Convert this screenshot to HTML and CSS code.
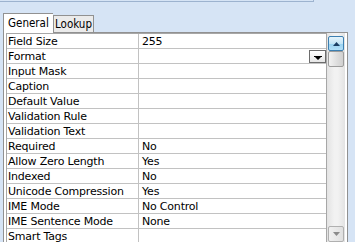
FILE: index.html
```html
<!DOCTYPE html>
<html>
<head>
<meta charset="utf-8">
<link rel="stylesheet" href="styles.css">
</head>
<body>
<div class="topline"><div class="topseg"></div></div>
<div class="tabs">
  <div class="tab active">General</div>
  <div class="tab">Lookup</div>
</div>
<div class="panel">
  <div class="grid">
    <div class="row"><div class="label">Field Size</div><div class="value">255</div></div>
    <div class="row"><div class="label">Format</div><div class="value"><span class="drop"><svg width="8" height="5" viewBox="0 0 8 5"><path d="M0 0H8V1H7L4 4H4L1 1H0Z" fill="#000"/></svg></span></div></div>
    <div class="row"><div class="label">Input Mask</div><div class="value"></div></div>
    <div class="row"><div class="label">Caption</div><div class="value"></div></div>
    <div class="row"><div class="label">Default Value</div><div class="value"></div></div>
    <div class="row"><div class="label">Validation Rule</div><div class="value"></div></div>
    <div class="row"><div class="label">Validation Text</div><div class="value"></div></div>
    <div class="row"><div class="label">Required</div><div class="value">No</div></div>
    <div class="row"><div class="label">Allow Zero Length</div><div class="value">Yes</div></div>
    <div class="row"><div class="label">Indexed</div><div class="value">No</div></div>
    <div class="row"><div class="label">Unicode Compression</div><div class="value">Yes</div></div>
    <div class="row"><div class="label">IME Mode</div><div class="value">No Control</div></div>
    <div class="row"><div class="label">IME Sentence Mode</div><div class="value">None</div></div>
    <div class="row"><div class="label">Smart Tags</div><div class="value"></div></div>
  </div>
  <div class="scrollbar">
    <div class="sbtn up"><svg width="7" height="4" viewBox="0 0 7 4"><path d="M3.5 0L7 4H0Z" fill="#1b3e63"/></svg></div>
    <div class="thumb"></div>
    <div class="track"></div>
    <div class="sbtn down"><svg width="7" height="4" viewBox="0 0 7 4"><path d="M0 0H7L3.5 4Z" fill="#8a8a8a"/></svg></div>
  </div>
</div>
</body>
</html>
```
FILE: styles.css
```css
html, body {
  margin: 0;
  padding: 0;
  height: 100%;
  overflow: hidden;
}
body {
  background: #d6e4f5;
  font-family: "DejaVu Sans", sans-serif;
  font-size: 11px;
  letter-spacing: -0.2px;
  color: #000;
  display: flex;
  flex-direction: column;
}
.topline {
  height: 2px;
  flex: none;
}
.topseg {
  width: 313px;
  height: 1px;
  border-bottom: 1px solid #9db3cf;
  border-right: 1px solid #9db3cf;
}
.tabs {
  flex: none;
  display: flex;
  align-items: flex-end;
  margin-top: 11px;
  padding-left: 3px;
  height: 19px;
  font-family: "DejaVu Sans Condensed", "DejaVu Sans", sans-serif;
  font-size: 11.5px;
  letter-spacing: 0;
}
.tab {
  box-sizing: border-box;
  border: 1px solid #919191;
  border-bottom: none;
  background: #ebebeb;
  height: 17px;
  line-height: 17px;
  padding: 0 1px 0 1px;
  width: 41px;
  overflow: hidden;
  white-space: nowrap;
}
.tab.active {
  background: #fff;
  height: 20px;
  width: 50px;
  line-height: 19px;
  padding-left: 4px;
  margin-bottom: -1px;
  z-index: 1;
  border-right: none;
}
.panel {
  flex: 1;
  min-height: 0;
  overflow: hidden;
  margin-left: 3px;
  width: 345px;
  box-sizing: border-box;
  background: #fff;
  border: 1px solid #919191;
  border-bottom: none;
  padding: 0 2px 0 2px;
  display: flex;
  align-items: flex-start;
}
.grid {
  width: 321px;
  flex: none;
  box-sizing: border-box;
  border-left: 1px solid #a7a7a7;
  border-right: 1px solid #a7a7a7;
  border-top: 1px solid #a7a7a7;
}
.row {
  display: flex;
  height: 15px;
  box-sizing: border-box;
  border-bottom: 1px solid #c2c2c2;
}
.label {
  width: 132px;
  box-sizing: border-box;
  border-right: 1px solid #c2c2c2;
  padding-left: 1px;
  line-height: 16px;
  white-space: nowrap;
}
.value {
  flex: 1;
  padding-left: 3px;
  line-height: 16px;
  display: flex;
  white-space: nowrap;
}
.drop {
  margin-left: auto;
  width: 17px;
  height: 13px;
  box-sizing: border-box;
  border: 1px solid #6d6d6d;
  background: linear-gradient(#ffffff, #e6e6e6);
  display: flex;
  align-items: center;
  justify-content: center;
  padding-top: 3px;
  margin-top: 1px;
}
.scrollbar {
  width: 18px;
  flex: none;
  align-self: stretch;
  box-sizing: border-box;
  padding: 3px 1px 0 1px;
  display: flex;
  flex-direction: column;
  background: linear-gradient(90deg, #e3e3e3, #f2f2f2 40%, #f2f2f2 60%, #e3e3e3);
}
.sbtn {
  height: 15px;
  flex: none;
  box-sizing: border-box;
  border-radius: 2px;
  display: flex;
  align-items: center;
  justify-content: center;
}
.up {
  border: 1px solid #3c7fb1;
  background: linear-gradient(#e5f4fc, #c4e5f6 50%, #98d1ef 51%, #b3e0f9);
}
.down {
  border: 1px solid #b0b0b0;
  background: linear-gradient(90deg, #f0f0f0, #e0e0e0);
  margin-top: auto;
  height: 16px;
}
.thumb {
  height: 16px;
  flex: none;
  box-sizing: border-box;
  border: 1px solid #9c9c9c;
  border-radius: 2px;
  background: linear-gradient(90deg, #f2f2f2, #e0e0e0 50%, #d0d0d0);
}
.track {
  flex: 1;
}
```
